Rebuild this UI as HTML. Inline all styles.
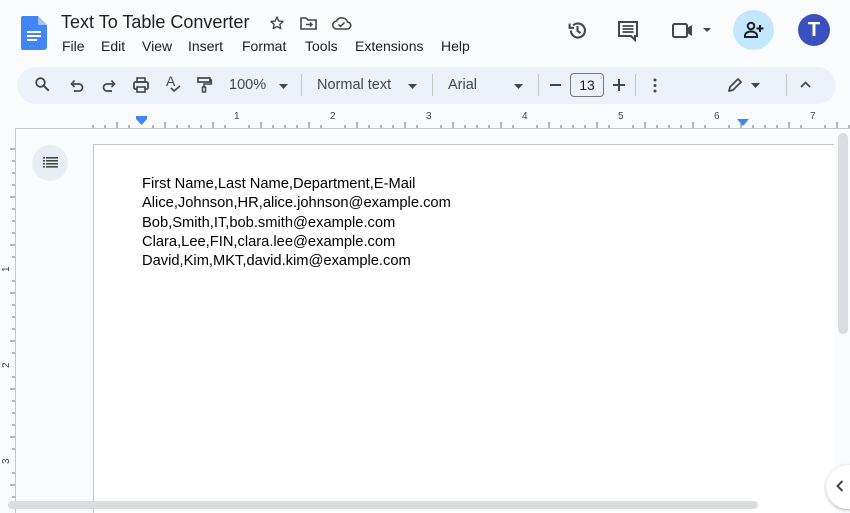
<!DOCTYPE html>
<html><head><meta charset="utf-8"><style>
*{margin:0;padding:0;box-sizing:border-box}
body{width:850px;height:513px;overflow:hidden;background:#f9fbfd;font-family:"Liberation Sans",Arial,sans-serif;position:relative;color:#444746}
.abs{position:absolute}
svg{position:absolute;overflow:visible}
.menu span{position:absolute;top:38px;font-size:14px;color:#202124}
.tb{position:absolute;left:17px;top:67px;width:819px;height:37px;background:#edf2fa;border-radius:19px}
.t{position:absolute;font-size:14.5px;color:#444746;top:77px}
.sep{position:absolute;top:74px;width:1px;height:22px;background:#c7c7c7}
.rn{position:absolute;font-size:10px;color:#444;top:111px}
.doc{position:absolute;left:93px;top:144px;width:741px;height:369px;background:#fff;border-left:1px solid #c7c7c7;border-top:1px solid #c7c7c7}
.line{position:absolute;left:142px;font-size:14.7px;color:#000;line-height:19.3px}
</style></head><body>
<svg style="left:21px;top:16px" width="26" height="34" viewBox="0 0 26 34"><path d="M2 0h15l9 9v22a3 3 0 0 1-3 3H2a2 2 0 0 1-2-2V2a2 2 0 0 1 2-2z" fill="#4285f4"/><path d="M17 0v7a2 2 0 0 0 2 2h7z" fill="#a1c2fa"/><rect x="6" y="15" width="14" height="2" fill="#fff"/><rect x="6" y="19" width="14" height="2" fill="#fff"/><rect x="6" y="23" width="10" height="2" fill="#fff"/></svg>
<div class="abs" style="left:61px;top:12px;font-size:18px;color:#1f1f1f">Text To Table Converter</div>
<svg style="left:269px;top:15px" width="16" height="16" viewBox="0 0 24 24"><path d="M12 3l2.6 6.1 6.6.6-5 4.4 1.5 6.5L12 17.2l-5.7 3.4 1.5-6.5-5-4.4 6.6-.6z" fill="none" stroke="#444746" stroke-width="2" stroke-linejoin="round"/></svg>
<svg style="left:300px;top:16px" width="17" height="14" viewBox="0 0 17 14"><path d="M1 2h5l2 2h8v9H1z" fill="none" stroke="#444746" stroke-width="1.6"/><path d="M6 8.5h6M10 6.5l2 2-2 2" fill="none" stroke="#444746" stroke-width="1.5"/></svg>
<svg style="left:332px;top:16px" width="19" height="14" viewBox="0 0 19 14"><path d="M5 13a4 4 0 0 1-.5-8A6 6 0 0 1 15.5 6 3.5 3.5 0 0 1 15 13z" fill="none" stroke="#444746" stroke-width="1.6"/><path d="M6.5 8.5l2 2 4-4" fill="none" stroke="#444746" stroke-width="1.5"/></svg>
<div class="menu"><span style="left:62px">File</span><span style="left:101px">Edit</span><span style="left:142px">View</span><span style="left:188px">Insert</span><span style="left:242px">Format</span><span style="left:305px">Tools</span><span style="left:355px">Extensions</span><span style="left:441px">Help</span></div>
<svg style="left:567px;top:20px" width="21" height="21" viewBox="0 0 24 24"><path d="M4.5 12A8 8 0 1 0 7 6.2" fill="none" stroke="#444746" stroke-width="2.4"/><path d="M3 4v5h5" fill="none" stroke="#444746" stroke-width="2.4"/><path d="M12 7v5.5l3.5 2.5" fill="none" stroke="#444746" stroke-width="2.4"/></svg>
<svg style="left:618px;top:21px" width="20" height="20" viewBox="0 0 20 20"><path d="M1 1h18v14h-2v4l-4-4H1z" fill="none" stroke="#444746" stroke-width="2"/><path d="M4.5 5h11M4.5 8h11M4.5 11h11" stroke="#444746" stroke-width="1.8"/></svg>
<svg style="left:672px;top:23px" width="22" height="15" viewBox="0 0 22 15"><rect x="1" y="1" width="14" height="13" rx="1.5" fill="none" stroke="#444746" stroke-width="2"/><path d="M15 5l5-3v11l-5-3z" fill="#444746"/></svg>
<svg style="left:703px;top:28px" width="8" height="4"><path d="M0 0h8L4 4z" fill="#444746"/></svg>
<div class="abs" style="left:733px;top:10px;width:41px;height:40px;border-radius:50%;background:#c2e7ff"></div>
<svg style="left:744px;top:21px" width="20" height="18" viewBox="0 0 20 18"><circle cx="7" cy="5" r="3.3" fill="none" stroke="#1f1f1f" stroke-width="2"/><path d="M1 16v-1.5c0-2.5 3-4 6-4s6 1.5 6 4V16z" fill="none" stroke="#1f1f1f" stroke-width="2"/><path d="M16 4v7M12.5 7.5h7" stroke="#1f1f1f" stroke-width="2"/></svg>
<div class="abs" style="left:798px;top:14px;width:32px;height:32px;border-radius:50%;background:#3c4fbf;color:#fff;font-weight:bold;font-size:20px;text-align:center;line-height:32px">T</div>
<div class="tb"></div>
<svg style="left:35px;top:77px" width="15" height="15" viewBox="0 0 15 15"><circle cx="5.5" cy="5.5" r="4.3" fill="none" stroke="#444746" stroke-width="1.8"/><path d="M8.8 8.8l5 5" stroke="#444746" stroke-width="2"/></svg>
<svg style="left:70px;top:79px" width="14" height="13" viewBox="0 0 14 13"><path d="M3 5h6a3.5 3.5 0 0 1 0 7H4" fill="none" stroke="#444746" stroke-width="1.7"/><path d="M4.5 1.5L1.5 5l3 3" fill="none" stroke="#444746" stroke-width="1.7"/></svg>
<svg style="left:102px;top:79px" width="14" height="13" viewBox="0 0 14 13"><path d="M11 5H5a3.5 3.5 0 0 0 0 7h5" fill="none" stroke="#444746" stroke-width="1.7"/><path d="M9.5 1.5l3 3.5-3 3" fill="none" stroke="#444746" stroke-width="1.7"/></svg>
<svg style="left:133px;top:77px" width="16" height="16" viewBox="0 0 16 16"><rect x="4" y="1" width="8" height="4" fill="none" stroke="#444746" stroke-width="1.6"/><rect x="1" y="5" width="14" height="7" rx="1.5" fill="none" stroke="#444746" stroke-width="1.8"/><rect x="4" y="10" width="8" height="5" fill="#edf2fa" stroke="#444746" stroke-width="1.6"/></svg>
<div class="abs" style="left:166px;top:73px;font-size:14px;color:#444746">A</div>
<svg style="left:170px;top:85px" width="11" height="8" viewBox="0 0 11 8"><path d="M1 3l3 3 6-5" fill="none" stroke="#444746" stroke-width="1.6"/></svg>
<svg style="left:197px;top:77px" width="15" height="16" viewBox="0 0 15 16"><rect x="1" y="1" width="12" height="4" fill="none" stroke="#444746" stroke-width="1.7"/><path d="M13 3h1.3v4H7v3" fill="none" stroke="#444746" stroke-width="1.6"/><rect x="5.5" y="10" width="3" height="5" fill="none" stroke="#444746" stroke-width="1.5"/></svg>
<div class="t" style="left:229px">100%</div>
<svg style="left:279px;top:84px" width="9" height="5"><path d="M0 0h9L4.5 5z" fill="#444746"/></svg>
<div class="sep" style="left:301px"></div>
<div class="t" style="left:317px">Normal text</div>
<svg style="left:408px;top:84px" width="9" height="5"><path d="M0 0h9L4.5 5z" fill="#444746"/></svg>
<div class="sep" style="left:432px"></div>
<div class="t" style="left:448px">Arial</div>
<svg style="left:514px;top:84px" width="9" height="5"><path d="M0 0h9L4.5 5z" fill="#444746"/></svg>
<div class="sep" style="left:538px"></div>
<div class="abs" style="left:550px;top:84px;width:11px;height:2px;background:#444746"></div>
<div class="abs" style="left:570px;top:73px;width:34px;height:24px;border:1px solid #747775;border-radius:4px;font-size:14px;text-align:center;line-height:22px;color:#1f1f1f">13</div>
<svg style="left:613px;top:79px" width="12" height="12"><path d="M6 0v12M0 6h12" stroke="#444746" stroke-width="2"/></svg>
<div class="sep" style="left:635px"></div>
<svg style="left:653px;top:78px" width="4" height="15"><circle cx="2" cy="2" r="1.5" fill="#444746"/><circle cx="2" cy="7.5" r="1.5" fill="#444746"/><circle cx="2" cy="13" r="1.5" fill="#444746"/></svg>
<svg style="left:727px;top:77px" width="16" height="16" viewBox="0 0 16 16"><path d="M2 14l1-4 8-8 3 3-8 8z" fill="none" stroke="#444746" stroke-width="1.7" stroke-linejoin="round"/></svg>
<svg style="left:751px;top:83px" width="9" height="5"><path d="M0 0h9L4.5 5z" fill="#444746"/></svg>
<div class="sep" style="left:786px"></div>
<svg style="left:800px;top:81px" width="11" height="7"><path d="M1 6l4.5-4.5L10 6" fill="none" stroke="#444746" stroke-width="1.8"/></svg>
<div class="abs" style="left:15px;top:128px;width:835px;height:1px;background:#c7c7c7"></div>
<svg style="left:0;top:0" width="850" height="130">
<g stroke="#747775" stroke-width="1">
<path d="M93 128v-3M105 128v-3M117 128v-6M129 128v-3M153 128v-3M165 128v-6M177 128v-3M189 128v-3M201 128v-3M213 128v-6M225 128v-3M249 128v-3M261 128v-6M273 128v-3M285 128v-3M297 128v-3M309 128v-6M321 128v-3M345 128v-3M357 128v-6M369 128v-3M381 128v-3M393 128v-3M405 128v-6M417 128v-3M441 128v-3M453 128v-6M465 128v-3M477 128v-3M489 128v-3M501 128v-6M513 128v-3M537 128v-3M549 128v-6M561 128v-3M573 128v-3M585 128v-3M597 128v-6M609 128v-3M633 128v-3M645 128v-6M657 128v-3M669 128v-3M681 128v-3M693 128v-6M705 128v-3M729 128v-3M741 128v-6M753 128v-3M765 128v-3M777 128v-3M789 128v-6M801 128v-3M825 128v-3M837 128v-6M849 128v-3"/>
</g>
<rect x="136" y="116" width="11" height="3" fill="#4285f4"/><path d="M136 119h11l-5.5 6z" fill="#4285f4"/>
<path d="M737 119h12l-6 7z" fill="#4285f4"/>
</svg>
<span class="rn" style="left:234px">1</span><span class="rn" style="left:330px">2</span><span class="rn" style="left:426px">3</span><span class="rn" style="left:522px">4</span><span class="rn" style="left:618px">5</span><span class="rn" style="left:714px">6</span><span class="rn" style="left:810px">7</span>
<div class="abs" style="left:15px;top:129px;width:1px;height:384px;background:#c7c7c7"></div>
<svg style="left:0;top:0" width="16" height="513"><g stroke="#747775"><path d="M10 149h5M12 161h3M12 173h3M12 185h3M10 197h5M12 209h3M12 221h3M12 233h3M10 245h5M12 257h3M12 281h3M10 293h5M12 305h3M12 317h3M12 329h3M10 341h5M12 353h3M12 377h3M10 389h5M12 401h3M12 413h3M12 425h3M10 437h5M12 449h3M12 473h3M10 485h5M12 497h3"/></g>
<text x="0" y="0" font-size="10" fill="#444" transform="translate(9,272) rotate(-90)">1</text>
<text x="0" y="0" font-size="10" fill="#444" transform="translate(9,368) rotate(-90)">2</text>
<text x="0" y="0" font-size="10" fill="#444" transform="translate(9,464) rotate(-90)">3</text></svg>
<div class="abs" style="left:32px;top:145px;width:36px;height:36px;border-radius:50%;background:#e9eef6"></div>
<svg style="left:43px;top:157px" width="15" height="11"><g fill="#444746"><rect x="0" y="0" width="2" height="1.6"/><rect x="3" y="0" width="12" height="1.6"/><rect x="0" y="3" width="2" height="1.6"/><rect x="3" y="3" width="12" height="1.6"/><rect x="0" y="6" width="2" height="1.6"/><rect x="3" y="6" width="12" height="1.6"/><rect x="0" y="9" width="2" height="1.6"/><rect x="3" y="9" width="12" height="1.6"/></g></svg>
<div class="doc"></div>
<div class="line" style="top:175px">First Name,Last Name,Department,E-Mail<br>Alice,Johnson,HR,alice.johnson@example.com<br>Bob,Smith,IT,bob.smith@example.com<br>Clara,Lee,FIN,clara.lee@example.com<br>David,Kim,MKT,david.kim@example.com</div>
<div class="abs" style="left:838px;top:133px;width:10px;height:201px;border-radius:5px;background:#dadce0"></div>
<div class="abs" style="left:8px;top:501px;width:750px;height:8px;border-radius:4px;background:#dadce0"></div>
<div class="abs" style="left:826px;top:465px;width:44px;height:44px;border-radius:50%;background:#fff;box-shadow:0 1px 3px rgba(0,0,0,.3)"></div>
<svg style="left:836px;top:480px" width="8" height="12"><path d="M6.5 1L1.5 6l5 5" fill="none" stroke="#444746" stroke-width="2"/></svg>
</body></html>
